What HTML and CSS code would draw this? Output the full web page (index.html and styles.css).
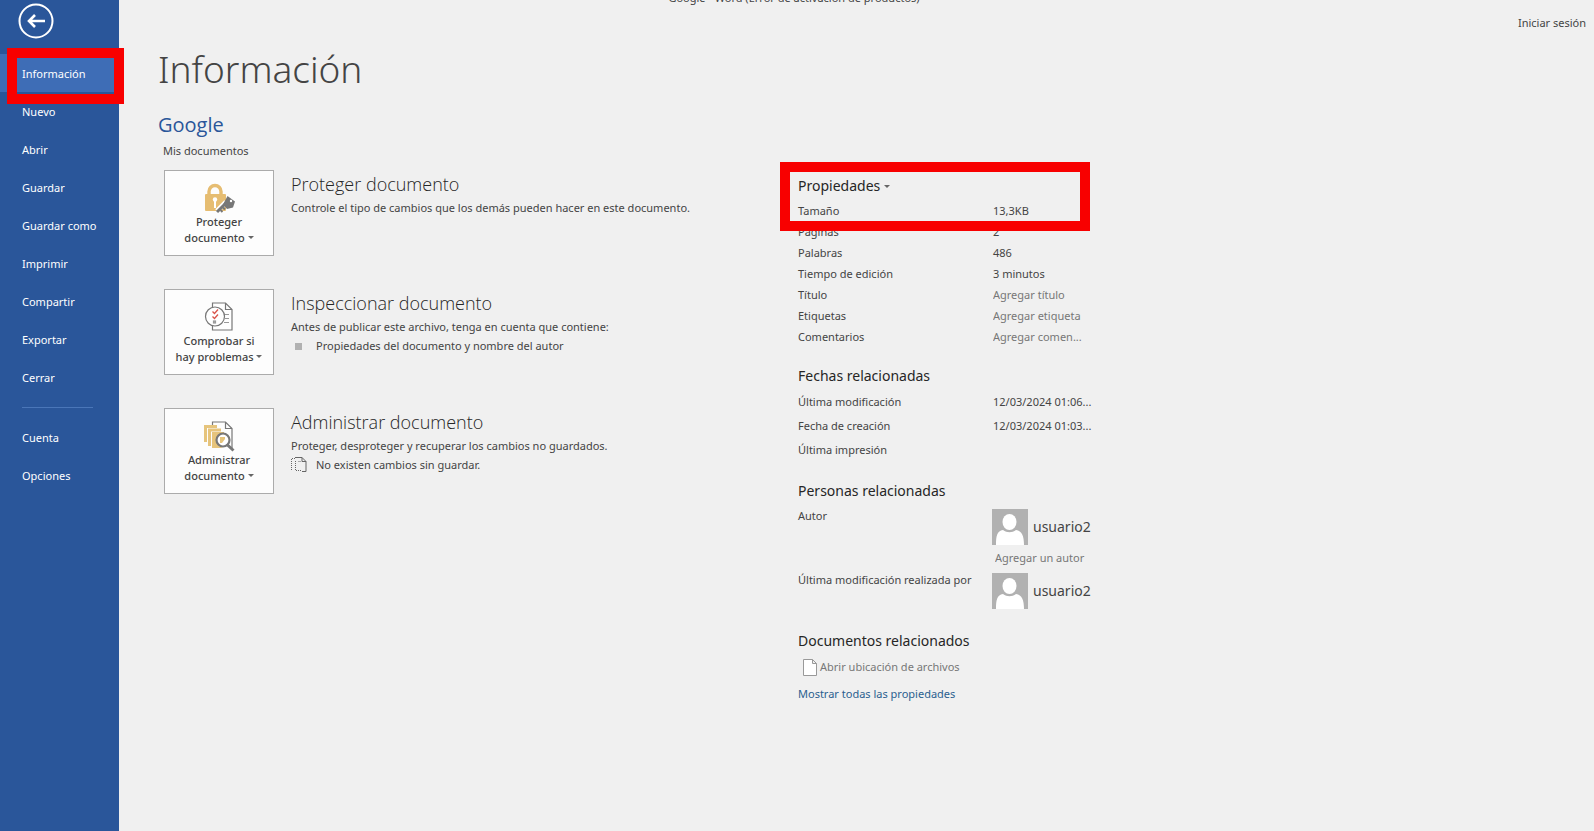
FILE: index.html
```html
<!DOCTYPE html>
<html lang="es">
<head>
  <meta charset="UTF-8" />
  <meta name="viewport" content="width=device-width, initial-scale=1.0"/>
  <title>Google - Word</title>
  <link rel="stylesheet" href="styles.css">
</head>
<body>
  <nav class="sidebar">
    <button class="back" aria-label="Atrás">
      <svg width="36" height="36" viewBox="0 0 36 36" fill="none" stroke="#fff">
        <circle cx="18" cy="18" r="16.5" stroke-width="2"/>
        <path d="M27 18H11M17 12l-6 6 6 6" stroke-width="2.6"/>
      </svg>
    </button>
    <button class="nav-item active">Información</button>
    <button class="nav-item">Nuevo</button>
    <button class="nav-item">Abrir</button>
    <button class="nav-item">Guardar</button>
    <button class="nav-item">Guardar como</button>
    <button class="nav-item">Imprimir</button>
    <button class="nav-item">Compartir</button>
    <button class="nav-item">Exportar</button>
    <button class="nav-item">Cerrar</button>
    <hr class="divider">
    <button class="nav-item">Cuenta</button>
    <button class="nav-item">Opciones</button>
    <div class="marker marker-nav"></div>
  </nav>

  <div class="page">
    <header class="topbar">
      <span class="window-title">Google - Word (Error de activación de productos)</span>
      <a class="sign-in" href="#">Iniciar sesión</a>
    </header>

    <main class="content">
      <h1>Información</h1>
      <h2 class="doc-name">Google</h2>
      <p class="doc-path">Mis documentos</p>

      <div class="columns">
        <div class="actions">
          <section class="action">
            <button class="tile">
              <svg width="32" height="32" viewBox="0 0 32 32">
                <path d="M6 13V9.500a6 6 0 0 1 12 0V13" fill="none" stroke="#e6bd72" stroke-width="3.400"/>
                <rect x="2" y="12" width="21" height="17" rx="1" fill="#e6bd72"/>
                <circle cx="12" cy="17.500" r="2.200" fill="#fff"/>
                <path d="M11 18h2v8h-2z" fill="#fff"/>
                <path d="M14 29l9-9" stroke="#fff" stroke-width="5"/>
                <path d="M14 30l9-9" stroke="#777" stroke-width="3"/>
                <path d="M17.500 28l2 2M20 25.500l2 2" stroke="#777" stroke-width="2"/>
                <path d="M24.500 14l7.500 5.500-2 6-6 1.500-4-4.500z" fill="#777"/>
                <circle cx="28" cy="19" r="1.200" fill="#fff"/>
              </svg>
              <span>Proteger<br>documento <i class="caret"></i></span>
            </button>
            <div class="action-text">
              <h3>Proteger documento</h3>
              <p>Controle el tipo de cambios que los demás pueden hacer en este documento.</p>
            </div>
          </section>

          <section class="action">
            <button class="tile">
              <svg width="32" height="32" viewBox="0 0 32 32" fill="none" stroke="#777" stroke-width="1.200">
                <path d="M9.500 2h13l6.500 6.500V29H9.500zM22.500 2v6.500H29" fill="#fff"/>
                <path d="M21 13.500h5M22 17.500h4M21 21.500h5" stroke="#999"/>
                <circle cx="12" cy="15.500" r="9.500" fill="#fff"/>
                <path d="M9.500 10.500l2 2 3.500-4M9.500 15.500l2 2 3.500-4" stroke="#d9534a" stroke-width="1.300"/>
                <rect x="10.500" y="20" width="2" height="2" stroke="#999"/>
              </svg>
              <span>Comprobar si<br>hay problemas <i class="caret"></i></span>
            </button>
            <div class="action-text">
              <h3>Inspeccionar documento</h3>
              <p>Antes de publicar este archivo, tenga en cuenta que contiene:</p>
              <ul>
                <li><span class="icon-slot"><i class="bullet"></i></span>Propiedades del documento y nombre del autor</li>
              </ul>
            </div>
          </section>

          <section class="action">
            <button class="tile">
              <svg width="32" height="32" viewBox="0 0 32 32">
                <path d="M9.500 6V2h13l6.500 6.500V29M22.500 2v6.500H29" fill="none" stroke="#777" stroke-width="1.200"/>
                <path d="M1 5h13v3H4v14H1zM5 8.500h13v3H8V26H5zM9 12h12v3l-5 4v7l4 2H9z" fill="#e6c47c"/>
                <circle cx="20" cy="20" r="6.500" fill="#fff" stroke="#777" stroke-width="2.200"/>
                <path d="M17 17h5v2l-3 4h-2z" fill="#e6c47c"/>
                <path d="M24.500 25l6 5.500" stroke="#777" stroke-width="3"/>
              </svg>
              <span>Administrar<br>documento <i class="caret"></i></span>
            </button>
            <div class="action-text">
              <h3>Administrar documento</h3>
              <p>Proteger, desproteger y recuperar los cambios no guardados.</p>
              <ul>
                <li><span class="icon-slot">
                  <svg width="16" height="16" viewBox="0 0 16 16" fill="none" stroke="#666">
                    <path d="M4 1.500H.5V13M4.500 4v9.500H10M7.500 4.500H10" stroke-dasharray="1 1"/>
                    <path d="M4 .5h7l4 4v10h-4M11 .5v4h4"/>
                  </svg>
                </span>No existen cambios sin guardar.</li>
              </ul>
            </div>
          </section>
        </div>

        <aside class="properties">
          <div class="marker marker-properties"></div>
          <button class="group-title">Propiedades <i class="caret"></i></button>
          <table class="props">
            <tr><th>Tamaño</th><td>13,3KB</td></tr>
            <tr><th>Páginas</th><td>2</td></tr>
            <tr><th>Palabras</th><td>486</td></tr>
            <tr><th>Tiempo de edición</th><td>3 minutos</td></tr>
            <tr><th><label for="titulo">Título</label></th><td><input id="titulo" type="text" placeholder="Agregar título"></td></tr>
            <tr><th><label for="etiquetas">Etiquetas</label></th><td><input id="etiquetas" type="text" placeholder="Agregar etiqueta"></td></tr>
            <tr><th><label for="comentarios">Comentarios</label></th><td><input id="comentarios" type="text" placeholder="Agregar comen..."></td></tr>
          </table>

          <h4 class="group-title">Fechas relacionadas</h4>
          <table class="props dates">
            <tr><th>Última modificación</th><td>12/03/2024 01:06...</td></tr>
            <tr><th>Fecha de creación</th><td>12/03/2024 01:03...</td></tr>
            <tr><th>Última impresión</th><td></td></tr>
          </table>

          <h4 class="group-title">Personas relacionadas</h4>
          <table class="props people">
            <tr>
              <th><label for="autor">Autor</label></th>
              <td>
                <div class="person">
                  <svg width="36" height="36" viewBox="0 0 36 36">
                    <path d="M0 0h36v36H0z" fill="#b1b1b1"/>
                    <ellipse cx="17.500" cy="13" rx="7" ry="8" fill="#fff"/>
                    <path d="M4 36c0-9 1-14 7-15 4 3 9 3 13 0 6 1 8 6 8 15z" fill="#fff"/>
                  </svg>
                  usuario2
                </div>
                <input id="autor" type="text" placeholder="Agregar un autor">
              </td>
            </tr>
            <tr>
              <th>Última modificación realizada por</th>
              <td>
                <div class="person">
                  <svg width="36" height="36" viewBox="0 0 36 36">
                    <path d="M0 0h36v36H0z" fill="#b1b1b1"/>
                    <ellipse cx="17.500" cy="13" rx="7" ry="8" fill="#fff"/>
                    <path d="M4 36c0-9 1-14 7-15 4 3 9 3 13 0 6 1 8 6 8 15z" fill="#fff"/>
                  </svg>
                  usuario2
                </div>
              </td>
            </tr>
          </table>

          <h4 class="group-title">Documentos relacionados</h4>
          <a class="file-location" href="#">
            <svg width="14" height="17" viewBox="0 0 14 17" fill="#fff" stroke="#999">
              <path d="M.5.500h9l4 4v12H.5zM9.500.500v4h4"/>
            </svg>
            Abrir ubicación de archivos
          </a>
          <a class="show-all" href="#">Mostrar todas las propiedades</a>
        </aside>
      </div>
    </main>
  </div>
</body>
</html>
```
FILE: styles.css
```css
:root {
  --word-blue: #2a569a;
  --active-blue: #3e6db6;
  --background: #f0f0f0;
  --text-color: #444;
  --heading-color: #262626;
  --muted: #777;
  --marker-red: #f80000;
}

* {
  box-sizing: border-box;
}

body {
  display: flex;
  min-height: 100vh;
  margin: 0;
  background-color: var(--background);
  color: var(--text-color);
  font-family: 'Segoe UI', 'Noto Sans', 'Open Sans', sans-serif;
  font-size: 11px;
  line-height: 16px;
}

h1, h2, h3, h4, p, ul {
  margin: 0;
  padding: 0;
  font-weight: normal;
}

button, input {
  padding: 0;
  border: none;
  background: none;
  color: inherit;
  font: inherit;
}

a {
  color: inherit;
  text-decoration: none;
}

.sidebar {
  position: relative;
  flex: none;
  width: 119px;
  background-color: var(--word-blue);
  color: white;
}

.back {
  display: block;
  height: 36px;
  margin: 3px 0 15px 18px;
}

.nav-item {
  display: block;
  width: 100%;
  height: 38px;
  padding: 2px 0 0 22px;
  text-align: left;
}

.nav-item.active {
  background-color: var(--active-blue);
}

.divider {
  height: 1px;
  margin: 11px 26px 10px 22px;
  border: none;
  background-color: #4a76b8;
}

.marker {
  position: absolute;
  border: 10px solid var(--marker-red);
  pointer-events: none;
}

.marker-nav {
  top: 48px;
  left: 7px;
  width: 117px;
  height: 56px;
  z-index: 1;
}

.marker-properties {
  top: -8px;
  left: -18px;
  width: 310px;
  height: 69px;
}

.page {
  flex: 1;
  min-width: 0;
}

.topbar {
  display: grid;
  grid-template-columns: 1fr auto 1fr;
  height: 39px;
  padding-right: 8px;
}

.window-title {
  grid-column: 2;
  margin: -10px 117px 0 0;
}

.sign-in {
  justify-self: end;
  padding-top: 15px;
}

.content {
  padding-left: 39px;
}

h1 {
  font-size: 37px;
  font-weight: 300;
  line-height: 60px;
}

.doc-name {
  margin-top: 10px;
  color: var(--word-blue);
  font-family: 'Segoe UI', 'Open Sans', sans-serif;
  font-size: 20px;
  line-height: 32px;
}

.doc-path {
  padding: 2px 0 0 5px;
}

.columns {
  display: grid;
  grid-template-columns: minmax(0, 634px) 1fr;
  margin-top: 11px;
  padding-left: 6px;
}

.actions {
  display: flex;
  flex-direction: column;
  gap: 33px;
}

.action {
  display: flex;
  gap: 17px;
}

.tile {
  display: flex;
  flex-direction: column;
  align-items: center;
  width: 110px;
  height: 86px;
  padding-top: 11px;
  border: 1px solid #ababab;
  background-color: #fdfdfd;
  font-weight: 500;
}

.caret {
  display: inline-block;
  border: 3px solid transparent;
  border-top-color: #666;
  border-bottom: none;
  vertical-align: 3px;
}

.action-text h3 {
  color: var(--heading-color);
  font-family: 'Segoe UI', 'Open Sans', sans-serif;
  font-size: 18px;
  font-weight: 300;
  line-height: 28px;
}

.action-text p {
  padding-top: 2px;
}

.action-text li {
  display: flex;
  align-items: center;
  height: 22px;
}

.icon-slot {
  display: flex;
  width: 25px;
}

.bullet {
  width: 7px;
  height: 7px;
  margin-left: 4px;
  background-color: #b1b1b1;
}

.properties {
  position: relative;
}

.group-title {
  display: block;
  padding-top: 2px;
  color: var(--heading-color);
  font-size: 14px;
  line-height: 28px;
}

.props {
  margin-bottom: 13px;
  border-collapse: collapse;
}

.props th {
  width: 195px;
  padding: 0;
  font-weight: normal;
  text-align: left;
  white-space: nowrap;
}

.props td {
  height: 21px;
  padding: 0;
}

.props input {
  display: block;
  width: 100px;
}

.props input::placeholder {
  color: var(--muted);
  opacity: 1;
}

.dates td {
  height: 24px;
}

.people {
  margin-bottom: 0;
}

.people th {
  width: 194px;
  padding-top: 3px;
  vertical-align: top;
}

.people td {
  height: 64px;
  padding-top: 4px;
  vertical-align: top;
}

.people tr:last-child td {
  height: 56px;
}

.people input {
  padding-left: 3px;
}

.person {
  display: flex;
  align-items: center;
  gap: 5px;
  margin-bottom: 5px;
  font-size: 14px;
}

.file-location {
  display: flex;
  align-items: center;
  gap: 3px;
  height: 24px;
  padding-left: 5px;
  color: var(--muted);
}

.show-all {
  display: block;
  margin-top: 7px;
  color: #2b5f8f;
}
```
